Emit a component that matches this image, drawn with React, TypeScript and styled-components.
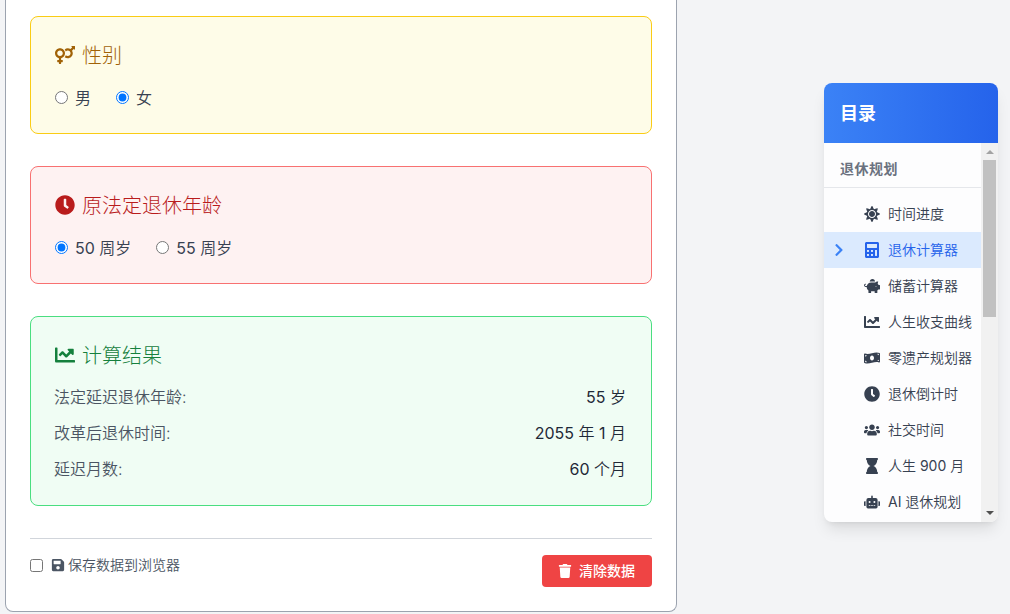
import type { ReactNode } from "react";
import styled, { createGlobalStyle, css } from "styled-components";
import {
  FaCalculator,
  FaChartLine,
  FaChevronRight,
  FaClock,
  FaHourglass,
  FaMoneyBillWave,
  FaPiggyBank,
  FaRobot,
  FaSave,
  FaSun,
  FaTrash,
  FaUsers,
  FaVenusMars,
} from "react-icons/fa";

const menu = [
  { icon: <FaSun />, label: "时间进度" },
  { icon: <FaCalculator />, label: "退休计算器", active: true },
  { icon: <FaPiggyBank />, label: "储蓄计算器" },
  { icon: <FaChartLine />, label: "人生收支曲线" },
  { icon: <FaMoneyBillWave />, label: "零遗产规划器" },
  { icon: <FaClock />, label: "退休倒计时" },
  { icon: <FaUsers />, label: "社交时间" },
  { icon: <FaHourglass />, label: "人生 900 月" },
  { icon: <FaRobot />, label: "AI 退休规划" },
];

const results = [
  { label: "法定延迟退休年龄:", value: "55 岁" },
  { label: "改革后退休时间:", value: "2055 年 1 月" },
  { label: "延迟月数:", value: "60 个月" },
];

type Tone = "yellow" | "red" | "green";

const tones = {
  yellow: { background: "#fefce8", border: "#facc15", title: "#a16207" },
  red: { background: "#fef2f2", border: "#f87171", title: "#b91c1c" },
  green: { background: "#f0fdf4", border: "#4ade80", title: "#15803d" },
};

type SectionProps = {
  tone: Tone;
  icon: ReactNode;
  title: string;
  children: ReactNode;
};

// digits and latin words are set a step heavier than the Chinese text
const Mixed = ({ text }: { text: string }) => (
  <>
    {text
      .split(/([A-Za-z0-9]+)/)
      .map((part, i) => (i % 2 ? <Latin key={i}>{part}</Latin> : part))}
  </>
);

const Section = ({ tone, icon, title, children }: SectionProps) => (
  <SectionBox $tone={tone}>
    <SectionTitle $tone={tone}>
      {icon}
      <span>{title}</span>
    </SectionTitle>
    {children}
  </SectionBox>
);

const App = () => (
  <>
    <GlobalStyle />
    <Page>
      <Card>
        <Section tone="yellow" icon={<FaVenusMars />} title="性别">
          <Options>
            <Option>
              <Radio name="gender" />
              <OptionText>男</OptionText>
            </Option>
            <Option>
              <Radio name="gender" defaultChecked />
              <OptionText>女</OptionText>
            </Option>
          </Options>
        </Section>

        <Section tone="red" icon={<FaClock />} title="原法定退休年龄">
          <Options>
            <Option>
              <Radio name="age" defaultChecked />
              <OptionText>
                <Mixed text="50 周岁" />
              </OptionText>
            </Option>
            <Option>
              <Radio name="age" />
              <OptionText>
                <Mixed text="55 周岁" />
              </OptionText>
            </Option>
          </Options>
        </Section>

        <Section tone="green" icon={<FaChartLine />} title="计算结果">
          <Results>
            {results.map(({ label, value }) => (
              <ResultRow key={label}>
                <span>{label}</span>
                <ResultValue>
                  <Mixed text={value} />
                </ResultValue>
              </ResultRow>
            ))}
          </Results>
        </Section>

        <Footer>
          <SaveLabel>
            <Checkbox />
            <FaSave />
            <span>保存数据到浏览器</span>
          </SaveLabel>
          <ClearButton>
            <FaTrash />
            清除数据
          </ClearButton>
        </Footer>
      </Card>

      <Toc>
        <TocHeader>目录</TocHeader>
        <TocBody>
          <TocContent>
            <TocGroup>退休规划</TocGroup>
            <TocList>
              {menu.map(({ icon, label, active }) => (
                <TocItem key={label} $active={active}>
                  <Marker>{active && <FaChevronRight />}</Marker>
                  {icon}
                  <span>
                    <Mixed text={label} />
                  </span>
                </TocItem>
              ))}
            </TocList>
          </TocContent>
          <Scrollbar>
            <Arrow />
            <Thumb />
            <Arrow $down />
          </Scrollbar>
        </TocBody>
      </Toc>
    </Page>
  </>
);

export default App;

const GlobalStyle = createGlobalStyle`
  * {
    box-sizing: border-box;
  }

  body {
    margin: 0;
    overflow: hidden;
    background: #f3f4f6;
    color: #374151;
    font-family: Inter, "Noto Sans CJK SC", sans-serif;
    font-size: 16px;
    font-weight: 350;
    line-height: 24px;
  }
`;

const Latin = styled.span`
  font-weight: 400;
`;

const Page = styled.div`
  display: flex;
  justify-content: space-between;
  align-items: flex-start;
  height: 614px;
  padding: 0 12px 0 5px;
`;

const Card = styled.main`
  display: flex;
  flex-direction: column;
  gap: 32px;
  width: 672px;
  height: 612px;
  padding: 16px 24px 24px;
  background: #fff;
  border: 1px solid #9ca3af;
  border-top: 0;
  border-radius: 0 0 8px 8px;
`;

const SectionBox = styled.section<{ $tone: Tone }>`
  padding: 24px 24px 22px;
  background: ${({ $tone }) => tones[$tone].background};
  border: 1px solid ${({ $tone }) => tones[$tone].border};
  border-radius: 8px;
`;

const SectionTitle = styled.h2<{ $tone: Tone }>`
  display: flex;
  align-items: center;
  gap: 7px;
  height: 28px;
  margin: 0 0 16px;
  color: ${({ $tone }) => tones[$tone].title};
  font-size: 20px;
  font-weight: 300;
  line-height: 28px;

  span {
    padding-top: 2px;
  }
`;

const Options = styled.div`
  display: flex;
  gap: 25px;
  padding-bottom: 2px;
`;

const Option = styled.label`
  display: flex;
  align-items: center;
  height: 24px;
`;

const OptionText = styled.span`
  padding-top: 1px;
`;

const Radio = styled.input.attrs({ type: "radio" })`
  width: 13px;
  height: 13px;
  margin: 0 7px 0 0;
`;

const Results = styled.div`
  display: flex;
  flex-direction: column;
  gap: 12px;
  margin: 0 1px 0 -1px;
  padding-bottom: 2px;
`;

const ResultRow = styled.div`
  display: flex;
  justify-content: space-between;
  color: #4b5563;
`;

const ResultValue = styled.span`
  color: #1f2937;
`;

const Footer = styled.footer`
  display: flex;
  justify-content: space-between;
  align-items: flex-start;
  padding-top: 16px;
  border-top: 1px solid #d1d5db;
`;

const SaveLabel = styled.label`
  display: flex;
  align-items: center;
  color: #4b5563;
  font-size: 14px;
  line-height: 20px;

  svg {
    margin-right: 3px;
  }
`;

const Checkbox = styled.input.attrs({ type: "checkbox" })`
  width: 13px;
  height: 13px;
  margin: 0 8px 0 0;
`;

const ClearButton = styled.button`
  display: flex;
  align-items: center;
  gap: 7px;
  width: 110px;
  height: 32px;
  padding: 0 16px;
  background: #ef4444;
  border: 0;
  border-radius: 4px;
  color: #fff;
  font: inherit;
  font-size: 14px;
  font-weight: 500;
`;

const Toc = styled.aside`
  width: 174px;
  height: 439px;
  margin-top: 83px;
  overflow: hidden;
  background: #fdfdfe;
  border-radius: 8px;
  box-shadow:
    0 10px 15px -3px rgba(0, 0, 0, 0.1),
    0 4px 6px -4px rgba(0, 0, 0, 0.1);
`;

const TocHeader = styled.div`
  height: 60px;
  padding: 17px 16px 15px;
  background: linear-gradient(to right, #3b82f6, #2563eb);
  color: #fff;
  font-size: 18px;
  font-weight: 700;
  line-height: 28px;
`;

const TocBody = styled.div`
  display: flex;
  height: 379px;
`;

const TocContent = styled.div`
  flex: 1;
`;

const TocGroup = styled.div`
  height: 45px;
  padding: 16px 16px 8px;
  border-bottom: 1px solid #e5e7eb;
  color: #6b7280;
  font-size: 14px;
  font-weight: 600;
  line-height: 20px;
  letter-spacing: 0.5px;
`;

const TocList = styled.div`
  padding-top: 8px;
`;

const TocItem = styled.div<{ $active?: boolean }>`
  display: flex;
  align-items: center;
  height: 36px;
  padding-left: 8px;
  color: #374151;
  font-size: 14px;
  white-space: nowrap;

  ${({ $active }) =>
    $active &&
    css`
      background: #dbeafe;
      color: #2563eb;
    `}

  > svg {
    width: 16px;
    height: 16px;
    margin-right: 8px;
  }
`;

const Marker = styled.div`
  display: flex;
  width: 32px;
  color: #3b82f6;
`;

const Scrollbar = styled.div`
  display: flex;
  flex-direction: column;
  align-items: center;
  width: 17px;
  padding-bottom: 1px;
  background: #f1f1f1;
`;

const Thumb = styled.div`
  width: 13px;
  height: 157px;
  margin-bottom: auto;
  background: #c1c1c1;
`;

const Arrow = styled.div<{ $down?: boolean }>`
  display: flex;
  justify-content: center;
  align-items: center;
  width: 17px;
  height: 17px;

  &::before {
    content: "";
    border: 4px solid transparent;
    ${({ $down }) =>
      $down
        ? "border-top-color: #505050; border-bottom: 0;"
        : "border-bottom-color: #a3a3a3; border-top: 0;"}
  }
`;
